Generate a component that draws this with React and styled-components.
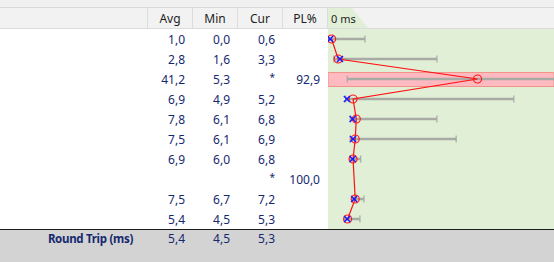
import React from "react";
import styled, { createGlobalStyle } from "styled-components";

const GlobalStyle = createGlobalStyle`
  html, body {
    margin: 0;
    padding: 0;
    background: #ffffff;
  }
  body {
    font-family: "Noto Sans", "Open Sans", sans-serif;
    font-size: 12px;
  }
`;

const NAME_W = 148;
const COL_W = 45;
const CHART_W = 226;
const ROW_H = 20;
const SCALE = 3.63;

const rows = [
  { avg: 1.0, min: 0.0, cur: 0.6, max: 10.2 },
  { avg: 2.8, min: 1.6, cur: 3.3, max: 30 },
  { avg: 41.2, min: 5.3, cur: null, max: 80, pl: 92.9, lost: true },
  { avg: 6.9, min: 4.9, cur: 5.2, max: 51.2 },
  { avg: 7.8, min: 6.1, cur: 6.8, max: 30 },
  { avg: 7.5, min: 6.1, cur: 6.9, max: 35.3 },
  { avg: 6.9, min: 6.0, cur: 6.8, max: 9 },
  { avg: null, min: null, cur: null, pl: 100.0 },
  { avg: 7.5, min: 6.7, cur: 7.2, max: 9.9 },
  { avg: 5.4, min: 4.5, cur: 5.3, max: 8.8 },
];

const fmt = (v) => (v == null ? "" : v.toFixed(1).replace(".", ","));

export default function App() {
  return (
    <>
      <GlobalStyle />
      <Window>
        <TopStrip />
        <Header>
          <HeadCell />
          <HeadCell>Avg</HeadCell>
          <HeadCell>Min</HeadCell>
          <HeadCell>Cur</HeadCell>
          <HeadCell>PL%</HeadCell>
          <ChartHead>
            <Tab>0 ms</Tab>
          </ChartHead>
        </Header>
        <Body>
          <Table>
            {rows.map((r, i) => (
              <Row key={i}>
                <NameCell />
                <Num>{fmt(r.avg)}</Num>
                <Num>{fmt(r.min)}</Num>
                <Num>{r.pl != null ? <Star>*</Star> : fmt(r.cur)}</Num>
                <Num>{r.pl != null ? fmt(r.pl) : ""}</Num>
              </Row>
            ))}
          </Table>
          <ChartPane>
            <PingChart />
          </ChartPane>
        </Body>
        <Footer>
          <FootRow>
            <FootLabel>Round Trip (ms)</FootLabel>
            <FootNum>5,4</FootNum>
            <FootNum>4,5</FootNum>
            <FootNum>5,3</FootNum>
          </FootRow>
        </Footer>
      </Window>
    </>
  );
}

function PingChart() {
  const h = rows.length * ROW_H;
  const px = (v) => v * SCALE;
  const cy = (i) => i * ROW_H + 10;
  const pts = rows
    .map((r, i) => (r.avg != null ? `${px(r.avg)},${cy(i)}` : null))
    .filter(Boolean)
    .join(" ");

  return (
    <svg width={CHART_W} height={h} viewBox={`0 0 ${CHART_W} ${h}`}>
      {rows.map((r, i) =>
        r.lost ? (
          <rect
            key={"hl" + i}
            x="0"
            y={cy(i) - 6.5}
            width={CHART_W}
            height="14"
            fill="#ffb9c1"
            stroke="#f29488"
            strokeWidth="1"
          />
        ) : null
      )}
      {rows.map((r, i) =>
        r.min != null ? (
          <g key={"bar" + i} stroke="#a7aaa5">
            <line x1={px(r.min)} y1={cy(i)} x2={px(r.max)} y2={cy(i)} strokeWidth="2.5" />
            <line x1={px(r.min)} y1={cy(i) - 3.5} x2={px(r.min)} y2={cy(i) + 3.5} strokeWidth="1.2" />
            <line x1={px(r.max)} y1={cy(i) - 3.5} x2={px(r.max)} y2={cy(i) + 3.5} strokeWidth="1.2" />
          </g>
        ) : null
      )}
      <polyline points={pts} fill="none" stroke="#ff1010" strokeWidth="1.2" />
      {rows.map((r, i) =>
        r.avg != null ? (
          <circle
            key={"c" + i}
            cx={px(r.avg)}
            cy={cy(i)}
            r="4"
            fill="none"
            stroke="#ff1a1a"
            strokeWidth="1.2"
          />
        ) : null
      )}
      {rows.map((r, i) =>
        r.cur != null ? (
          <g key={"x" + i} stroke="#1a1aff" strokeWidth="1.5">
            <line x1={px(r.cur) - 3} y1={cy(i) - 3} x2={px(r.cur) + 3} y2={cy(i) + 3} />
            <line x1={px(r.cur) - 3} y1={cy(i) + 3} x2={px(r.cur) + 3} y2={cy(i) - 3} />
          </g>
        ) : null
      )}
    </svg>
  );
}

const Window = styled.div`
  width: 554px;
  height: 262px;
  display: flex;
  flex-direction: column;
  overflow: hidden;
  background: #ffffff;
`;

const TopStrip = styled.div`
  height: 7px;
  background: #f0f0f0;
  border-bottom: 1px solid #d9d9d9;
`;

const Header = styled.div`
  display: grid;
  grid-template-columns: ${NAME_W}px repeat(4, ${COL_W}px) 1fr;
  height: 20px;
  background: #f2f2f2;
  border-bottom: 1px solid #dcdcdc;
`;

const HeadCell = styled.div`
  display: flex;
  align-items: center;
  justify-content: center;
  border-right: 1px solid #dcdcdc;
  color: #1e1e1e;
  font-size: 12px;
`;

const ChartHead = styled.div`
  display: flex;
  align-items: stretch;
`;

const Tab = styled.div`
  width: 40px;
  padding-left: 3px;
  display: flex;
  align-items: center;
  font-size: 11px;
  color: #1e1e1e;
  background: #e0efd6;
  clip-path: polygon(0 0, 24px 0, 40px 100%, 0 100%);
`;

const Body = styled.div`
  display: flex;
`;

const Table = styled.div`
  width: ${NAME_W + COL_W * 4}px;
  display: flex;
  flex-direction: column;
`;

const Row = styled.div`
  display: grid;
  grid-template-columns: ${NAME_W}px repeat(4, ${COL_W}px);
  height: ${ROW_H}px;
  align-items: center;
`;

const NameCell = styled.div``;

const Num = styled.div`
  text-align: right;
  padding-right: 8px;
  color: #15296f;
  font-size: 12px;
`;

const Star = styled.span`
  font-size: 10px;
  position: relative;
  top: -3px;
`;

const ChartPane = styled.div`
  width: ${CHART_W}px;
  background: #e0efd6;
  display: flex;
  overflow: hidden;
`;

const Footer = styled.div`
  flex: 1;
  background: #d3d3d3;
  border-top: 1px solid #1c1c1c;
`;

const FootRow = styled.div`
  display: grid;
  grid-template-columns: ${NAME_W}px repeat(3, ${COL_W}px);
  height: 17px;
  align-items: center;
`;

const FootLabel = styled.div`
  text-align: right;
  padding-right: 15px;
  font-weight: bold;
  color: #15296f;
  font-size: 11.5px;
  letter-spacing: -0.3px;
`;

const FootNum = styled(Num)``;
